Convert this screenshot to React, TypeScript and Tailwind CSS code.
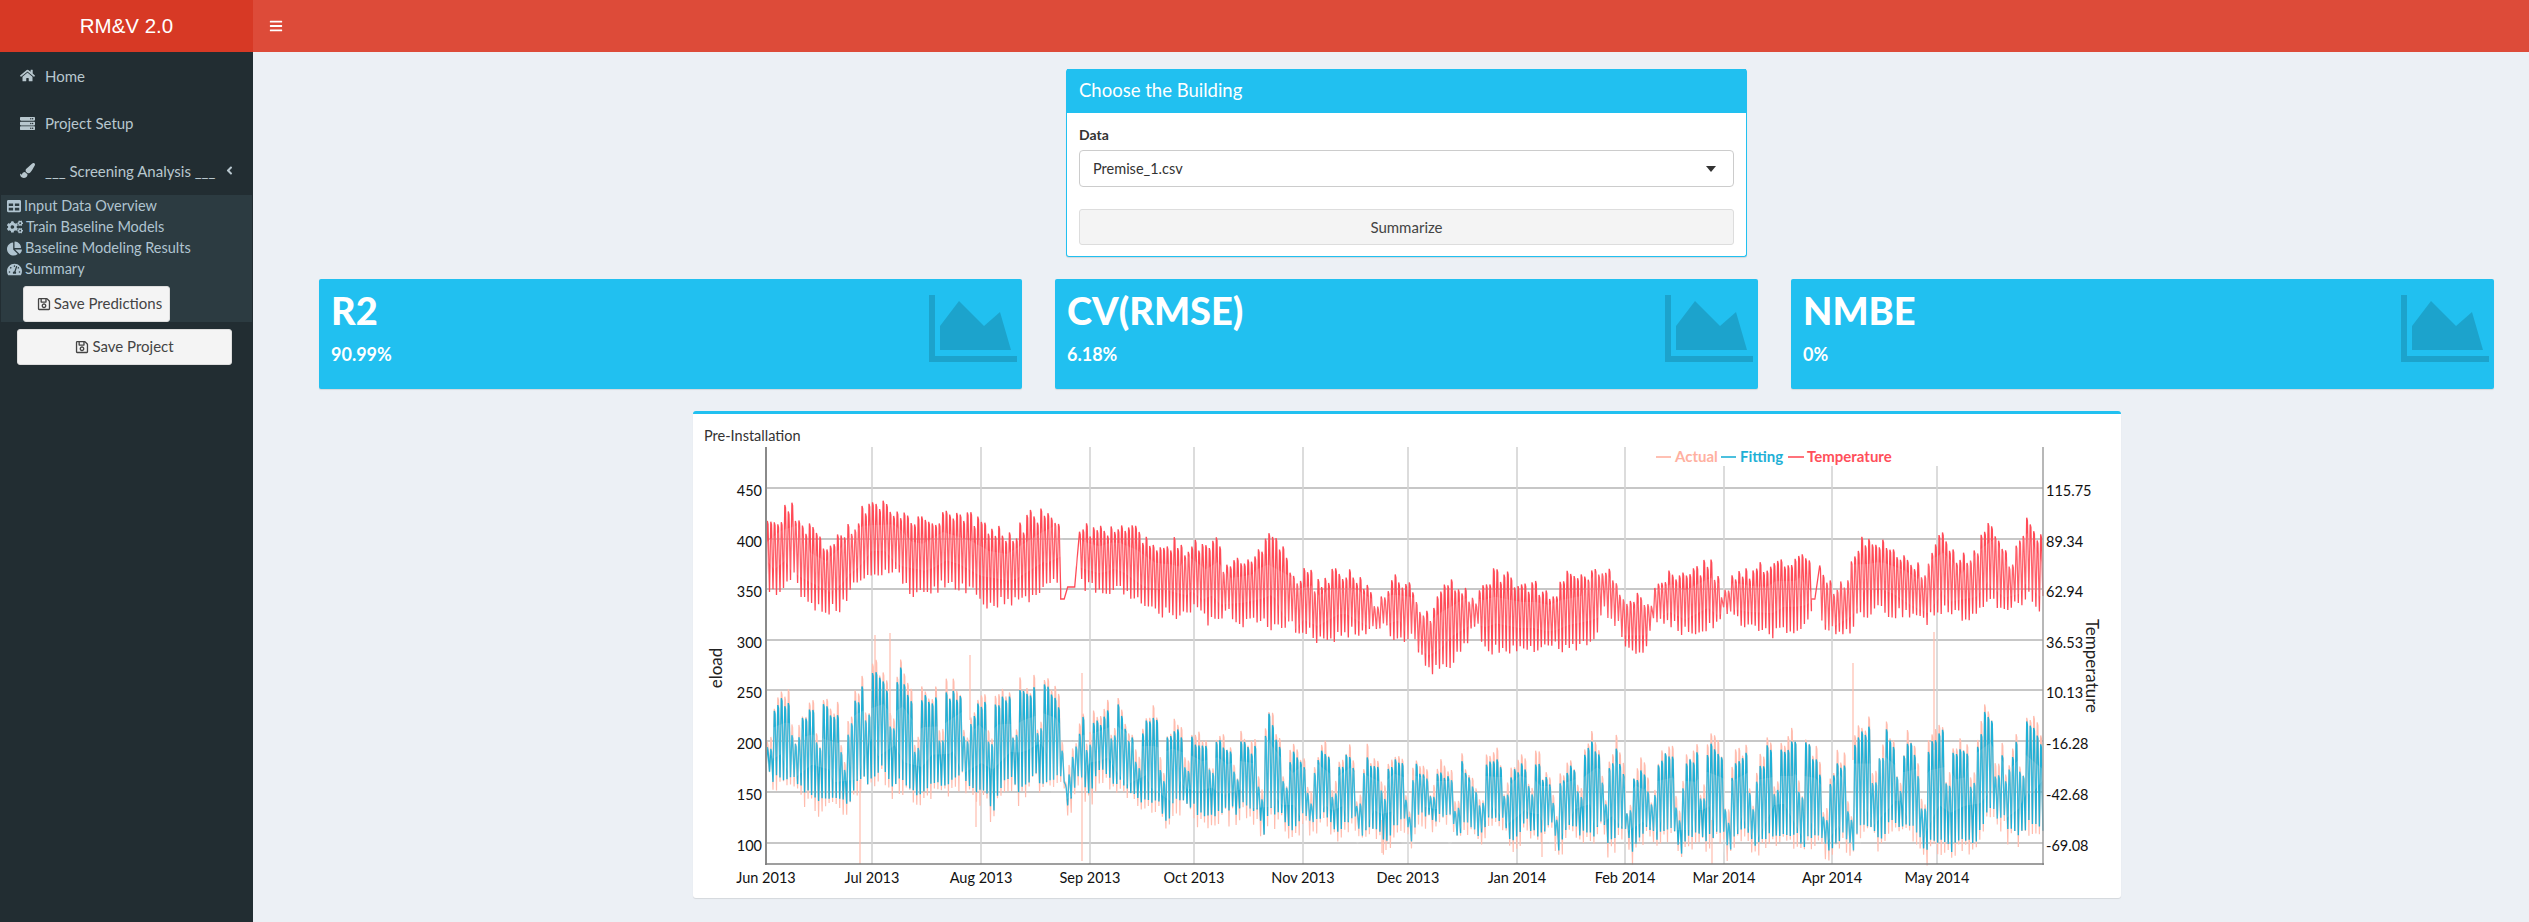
import {
  FaAngleLeft,
  FaBars,
  FaChartPie,
  FaCogs,
  FaHome,
  FaPaintBrush,
  FaRegSave,
  FaServer,
  FaTable,
  FaTachometerAlt,
} from "react-icons/fa";

type Key = [number, number, number];

// envelope of the series read off the picture: [x, top, bottom] in page pixels
const RED: Key[] = [
  [766, 522, 597], [790, 505, 575], [800, 525, 598], [810, 527, 608], [830, 545, 610], [840, 525, 605],
  [850, 530, 585], [865, 502, 575], [890, 505, 570], [905, 517, 590], [925, 518, 597], [945, 512, 580],
  [965, 515, 590], [985, 522, 605], [1010, 535, 600], [1030, 513, 597], [1050, 510, 575], [1058, 525, 595],
  [1078, 522, 585], [1100, 530, 590], [1115, 520, 590], [1130, 527, 595], [1150, 540, 610], [1170, 540, 615],
  [1185, 548, 615], [1190, 540, 607], [1205, 550, 620], [1215, 540, 618], [1225, 570, 612], [1240, 558, 622],
  [1260, 550, 622], [1266, 531, 625], [1285, 555, 622], [1295, 585, 635], [1305, 565, 632], [1315, 585, 640],
  [1335, 568, 635], [1350, 572, 630], [1365, 585, 635], [1375, 605, 625], [1395, 578, 637], [1410, 585, 635],
  [1420, 605, 665], [1430, 612, 670], [1445, 585, 665], [1460, 583, 650], [1470, 600, 620], [1485, 577, 650],
  [1495, 570, 650], [1520, 580, 650], [1535, 585, 645], [1550, 592, 645], [1565, 575, 650], [1590, 570, 645],
  [1600, 563, 610], [1615, 575, 625], [1622, 595, 650], [1640, 595, 650], [1650, 600, 618], [1660, 580, 625],
  [1670, 570, 625], [1685, 575, 635], [1710, 560, 625], [1720, 590, 612], [1735, 572, 620], [1750, 568, 630],
  [1770, 565, 635], [1780, 558, 630], [1800, 557, 630], [1808, 565, 610], [1822, 566, 625], [1832, 590, 635],
  [1845, 580, 630], [1855, 540, 615], [1870, 542, 612], [1880, 540, 610], [1900, 550, 615], [1915, 565, 620],
  [1925, 575, 620], [1935, 535, 610], [1942, 527, 610], [1955, 560, 615], [1970, 555, 615], [1985, 525, 600],
  [1990, 515, 600], [2000, 545, 610], [2010, 565, 605], [2025, 520, 595], [2035, 540, 615], [2043, 530, 590],
];

const BLUE: Key[] = [
  [766, 723, 770], [775, 703, 780], [790, 697, 775], [797, 730, 787], [810, 702, 795], [825, 708, 800],
  [840, 720, 795], [845, 740, 805], [855, 700, 775], [865, 670, 780], [880, 675, 765], [885, 690, 780],
  [900, 670, 780], [915, 712, 795], [925, 697, 785], [945, 695, 785], [960, 690, 770], [970, 720, 790],
  [980, 698, 790], [990, 700, 805], [1005, 700, 775], [1020, 687, 790], [1030, 690, 775], [1045, 675, 780],
  [1060, 715, 775], [1065, 775, 810], [1075, 740, 775], [1085, 708, 790], [1095, 725, 770], [1115, 700, 780],
  [1130, 740, 795], [1145, 720, 800], [1155, 720, 800], [1165, 745, 825], [1170, 725, 800], [1190, 735, 805],
  [1195, 740, 815], [1215, 735, 810], [1225, 750, 810], [1240, 745, 805], [1255, 745, 810], [1260, 790, 830],
  [1266, 712, 810], [1280, 745, 815], [1290, 755, 830], [1300, 755, 815], [1310, 790, 820], [1320, 752, 815],
  [1335, 760, 830], [1350, 755, 815], [1360, 790, 835], [1365, 755, 825], [1385, 765, 835], [1400, 760, 815],
  [1408, 795, 835], [1415, 765, 815], [1435, 775, 815], [1448, 775, 815], [1455, 800, 835], [1460, 765, 820],
  [1475, 790, 835], [1485, 760, 820], [1500, 762, 820], [1510, 770, 840], [1525, 760, 820], [1535, 765, 835],
  [1550, 780, 820], [1555, 790, 845], [1565, 770, 825], [1580, 755, 830], [1590, 745, 835], [1600, 750, 815],
  [1605, 770, 845], [1615, 750, 830], [1625, 790, 830], [1630, 780, 850], [1640, 775, 830], [1650, 790, 830],
  [1655, 757, 835], [1670, 755, 830], [1678, 805, 850], [1685, 755, 835], [1700, 757, 835], [1710, 740, 835],
  [1720, 755, 830], [1727, 790, 845], [1735, 760, 830], [1745, 750, 830], [1755, 780, 845], [1765, 750, 835],
  [1780, 745, 835], [1795, 745, 835], [1800, 770, 848], [1805, 740, 835], [1818, 770, 835], [1825, 790, 850],
  [1840, 760, 835], [1850, 790, 845], [1855, 730, 825], [1870, 730, 825], [1880, 770, 840], [1885, 730, 820],
  [1900, 750, 825], [1910, 745, 825], [1920, 780, 845], [1930, 745, 840], [1940, 720, 840], [1950, 750, 845],
  [1960, 745, 840], [1975, 745, 835], [1985, 710, 810], [2000, 750, 815], [2005, 780, 830], [2015, 735, 835],
  [2025, 725, 820], [2043, 740, 835],
];

// single readings far off the daily curve: [x, from, to]
const SPIKES: Key[] = [
  [875, 635, 720], [890, 633, 720], [970, 655, 720], [860, 780, 864], [976, 780, 827], [1082, 673, 861],
  [1853, 663, 760], [1934, 632, 750], [1712, 820, 864], [1542, 820, 857], [1382, 820, 853], [1386, 820, 850],
];

function interp(keys: Key[], x: number, col: 1 | 2) {
  for (let i = 1; i < keys.length; i++) {
    if (x <= keys[i][0]) {
      const t = (x - keys[i - 1][0]) / (keys[i][0] - keys[i - 1][0]);
      return keys[i - 1][col] + (keys[i][col] - keys[i - 1][col]) * t;
    }
  }
  return keys[keys.length - 1][col];
}

function rng(seed: number) {
  let s = seed;
  return () => {
    s = (s * 1664525 + 1013904223) % 4294967296;
    return s / 4294967296;
  };
}

function dayPath(top: number, bot: number, x: number) {
  return `L${(x + 1.3).toFixed(1)} ${top.toFixed(1)}L${(x + 2).toFixed(1)} ${(top + 3).toFixed(1)}L${(x + 3.5).toFixed(1)} ${bot.toFixed(1)}`;
}

function buildPaths() {
  const r = rng(42);
  let red = "M766 597";
  let blue = "M766 770";
  let pink = "M766 775";
  let redMid = "";
  let blueMid = "";
  let redGap = true;
  for (let d = 0; d < 364; d++) {
    const x = 766 + d * 3.508;
    if (x > 1060 && x < 1076) {
      red += `L${x.toFixed(1)} ${x < 1065 ? 599 : 587}`;
      redGap = true;
    } else if (x > 1811 && x < 1817) {
      red += `L${x.toFixed(1)} 599`;
      redGap = true;
    } else {
      const rt = interp(RED, x, 1);
      const rb = interp(RED, x, 2);
      red += dayPath(rt + r() * 16 - 5, rb + r() * 12 - 6, x);
      redMid += `${redGap ? "M" : "L"}${x.toFixed(1)} ${((rt + rb) / 2).toFixed(1)}`;
      redGap = false;
    }
    const weekend = d % 7 < 2;
    const top = interp(BLUE, x, 1);
    const bot = interp(BLUE, x, 2);
    const t = (weekend ? top + (bot - top) * 0.45 : top) + r() * 14 - 5;
    const b = bot + (weekend ? r() * 8 : r() * 6 - 3);
    blue += dayPath(t, b, x);
    blueMid += `${blueMid ? "L" : "M"}${x.toFixed(1)} ${((top + bot) / 2).toFixed(1)}`;
    pink += dayPath(t - r() * 14, b + r() * 16, x);
  }
  return { red, blue, pink, redMid, blueMid };
}

const paths = buildPaths();

const LEFT_TICKS: [string, number][] = [
  ["450", 488], ["400", 539], ["350", 589], ["300", 640], ["250", 690], ["200", 741], ["150", 792], ["100", 843],
];
const RIGHT_TICKS = ["115.75", "89.34", "62.94", "36.53", "10.13", "-16.28", "-42.68", "-69.08"];
const MONTHS: [string, number][] = [
  ["Jun 2013", 766], ["Jul 2013", 872], ["Aug 2013", 981], ["Sep 2013", 1090], ["Oct 2013", 1194], ["Nov 2013", 1303],
  ["Dec 2013", 1408], ["Jan 2014", 1517], ["Feb 2014", 1625], ["Mar 2014", 1724], ["Apr 2014", 1832], ["May 2014", 1937],
];

function Chart() {
  return (
    <svg width="1428" height="458" viewBox="693 440 1428 458" className="block">
      {LEFT_TICKS.map(([, y]) => (
        <line key={y} x1="766" x2="2043" y1={y} y2={y} stroke="#b4b4b4" strokeWidth="1.4" />
      ))}
      {MONTHS.slice(1).map(([, x]) => (
        <line key={x} x1={x} x2={x} y1="447" y2="864" stroke="#d4d4d4" strokeWidth="1.6" />
      ))}
      <rect x="1650" y="447" width="392" height="19" fill="#fff" />
      <path d={paths.pink} fill="none" stroke="#ffbcae" strokeWidth="1.2" />
      {SPIKES.map(([x, a, b]) => (
        <line key={x} x1={x} x2={x} y1={a} y2={b} stroke="#ffbcae" strokeWidth="1.2" />
      ))}
      <path d={paths.blue} fill="none" stroke="#1fb0d6" strokeWidth="1.35" />
      <path d={paths.blueMid} fill="none" stroke="#fff" strokeWidth="28" opacity="0.12" />
      <path d={paths.red} fill="none" stroke="#ff4a56" strokeWidth="1.3" />
      <path d={paths.redMid} fill="none" stroke="#fff" strokeWidth="26" opacity="0.12" />
      <line x1="766" x2="766" y1="447" y2="865" stroke="#8a8a8a" strokeWidth="2" />
      <line x1="2043" x2="2043" y1="447" y2="865" stroke="#9a9a9a" strokeWidth="1.4" />
      <line x1="765" x2="2044" y1="864" y2="864" stroke="#7f7f7f" strokeWidth="1.4" />
      <g fontFamily="Lato, sans-serif" fontSize="14.5" fill="#111">
        {LEFT_TICKS.map(([label, y]) => (
          <text key={label} x="762" y={y + 8} textAnchor="end">{label}</text>
        ))}
        {RIGHT_TICKS.map((label, i) => (
          <text key={label} x="2046" y={LEFT_TICKS[i][1] + 8}>{label}</text>
        ))}
        {MONTHS.map(([label, x]) => (
          <text key={label} x={x} y="883" textAnchor="middle">{label}</text>
        ))}
      </g>
      <g fontFamily="Lato, sans-serif" fontSize="17" fill="#222">
        <text transform="translate(722 668) rotate(-90)" textAnchor="middle">eload</text>
        <text transform="translate(2086 666) rotate(90)" textAnchor="middle">Temperature</text>
      </g>
      <g fontFamily="Lato, sans-serif" fontSize="15" fontWeight="700">
        <line x1="1656" x2="1671" y1="457" y2="457" stroke="#ffb0a0" strokeWidth="1.6" />
        <text x="1675" y="462" fill="#ffb0a0">Actual</text>
        <line x1="1721" x2="1736" y1="457" y2="457" stroke="#1fb0d6" strokeWidth="1.6" />
        <text x="1740" y="462" fill="#1fb0d6">Fitting</text>
        <line x1="1788" x2="1804" y1="457" y2="457" stroke="#ff4f5a" strokeWidth="1.6" />
        <text x="1807" y="462" fill="#ff4f5a">Temperature</text>
      </g>
    </svg>
  );
}

function StatCard({ title, value }: { title: string; value: string }) {
  return (
    <div className="relative h-[110px] w-[703px] rounded-[2px] bg-[#21c0f0] pl-[12px] pt-[8px] text-white shadow-[0_1px_1px_rgba(0,0,0,0.1)]">
      <div className="text-[38px] font-black leading-[46px]">{title}</div>
      <div className="mt-[10px] text-[18px] font-bold leading-[22px]">{value}</div>
      <svg width="88" height="67" viewBox="0 0 88 67" className="absolute right-[5px] top-[16px]" fill="rgba(0,0,0,0.15)">
        <path d="M0 0h6v61h82v6H0z" />
        <path d="M11 31L30 6l25 25 16-14 11 38H11z" />
      </svg>
    </div>
  );
}

function NavItem({ icon, label, chevron }: { icon: React.ReactNode; label: string; chevron?: boolean }) {
  return (
    <div className="flex h-[47.5px] items-center pl-[20px] text-[15px] text-[#b8c7ce]">
      <span className="flex w-[25px] shrink-0 text-[15px]">{icon}</span>
      <span>{label}</span>
      {chevron && <FaAngleLeft className="ml-[8px] text-[13px]" />}
    </div>
  );
}

function SubItem({ icon, label }: { icon: React.ReactNode; label: string }) {
  return (
    <div className="flex h-[21px] items-center gap-[3px] pl-[6px] text-[14.5px] text-[#b0c4d0]">
      {icon}
      <span>{label}</span>
    </div>
  );
}

export default function App() {
  return (
    <div className="flex h-[922px] flex-col overflow-hidden bg-[#ecf0f5] font-['Lato',sans-serif] text-[14px]">
      <header className="flex h-[52px] shrink-0 bg-[#dd4b39] text-white">
        <div className="flex w-[253px] items-center justify-center bg-[#d73925] font-['Liberation_Sans',sans-serif] text-[20.5px]">
          RM&amp;V 2.0
        </div>
        <div className="flex items-center pl-[16px]">
          <FaBars className="text-[14px]" />
        </div>
      </header>

      <div className="flex flex-1">
        <aside className="w-[253px] shrink-0 bg-[#222d32]">
          <NavItem icon={<FaHome />} label="Home" />
          <NavItem icon={<FaServer />} label="Project Setup" />
          <NavItem icon={<FaPaintBrush />} label="___ Screening Analysis ___" chevron />
          <div className="ml-[1px] h-[127px] w-[251px] bg-[#2c3b41] pt-[1px]">
            <SubItem icon={<FaTable className="text-[14px]" />} label="Input Data Overview" />
            <SubItem icon={<FaCogs className="text-[16px]" />} label="Train Baseline Models" />
            <SubItem icon={<FaChartPie className="text-[15px]" />} label="Baseline Modeling Results" />
            <SubItem icon={<FaTachometerAlt className="text-[15px]" />} label="Summary" />
            <button className="ml-[22px] mt-[6px] flex h-[36px] w-[147px] items-center justify-center gap-[3px] rounded-[3px] border border-[#ddd] bg-[#f4f4f4] pl-[6px] text-[15px] text-[#444]">
              <FaRegSave className="text-[14px]" /> Save Predictions
            </button>
          </div>
          <button className="ml-[17px] mt-[7px] flex h-[36px] w-[215px] items-center justify-center gap-[3px] rounded-[3px] border border-[#ddd] bg-[#f4f4f4] text-[15px] text-[#444]">
            <FaRegSave className="text-[14px]" /> Save Project
          </button>
        </aside>

        <main className="flex-1 pt-[17px]">
          <section className="ml-[813px] w-[681px] rounded-[3px] border border-t-0 border-[#21c0f0] bg-white shadow-[0_1px_1px_rgba(0,0,0,0.1)]">
            <div className="flex h-[44px] items-center bg-[#21c0f0] pl-[12px] text-[18.5px] text-white">Choose the Building</div>
            <div className="px-[12px] pb-[11px] pt-[12px]">
              <label className="block text-[14px] font-bold leading-[20px] text-[#333]">Data</label>
              <div className="mt-[5px] flex h-[37px] items-center justify-between rounded-[4px] border border-[#ccc] bg-white pl-[13px] pr-[17px] text-[14.5px] text-[#333]">
                Premise_1.csv
                <span className="border-x-[5px] border-t-[6px] border-x-transparent border-t-[#333]" />
              </div>
              <button className="mt-[22px] flex h-[36px] w-full items-center justify-center rounded-[3px] border border-[#ddd] bg-[#f4f4f4] text-[15px] text-[#444]">
                Summarize
              </button>
            </div>
          </section>

          <div className="ml-[66px] mt-[22px] flex gap-[33px]">
            <StatCard title="R2" value="90.99%" />
            <StatCard title="CV(RMSE)" value="6.18%" />
            <StatCard title="NMBE" value="0%" />
          </div>

          <section className="ml-[440px] mt-[22px] h-[487px] w-[1428px] rounded-[3px] border-t-[3px] border-[#21c0f0] bg-white shadow-[0_1px_1px_rgba(0,0,0,0.1)]">
            <div className="h-[26px] pl-[11px] pt-[12px] text-[14.5px] leading-[20px] text-[#333]">Pre-Installation</div>
            <Chart />
          </section>
        </main>
      </div>
    </div>
  );
}
